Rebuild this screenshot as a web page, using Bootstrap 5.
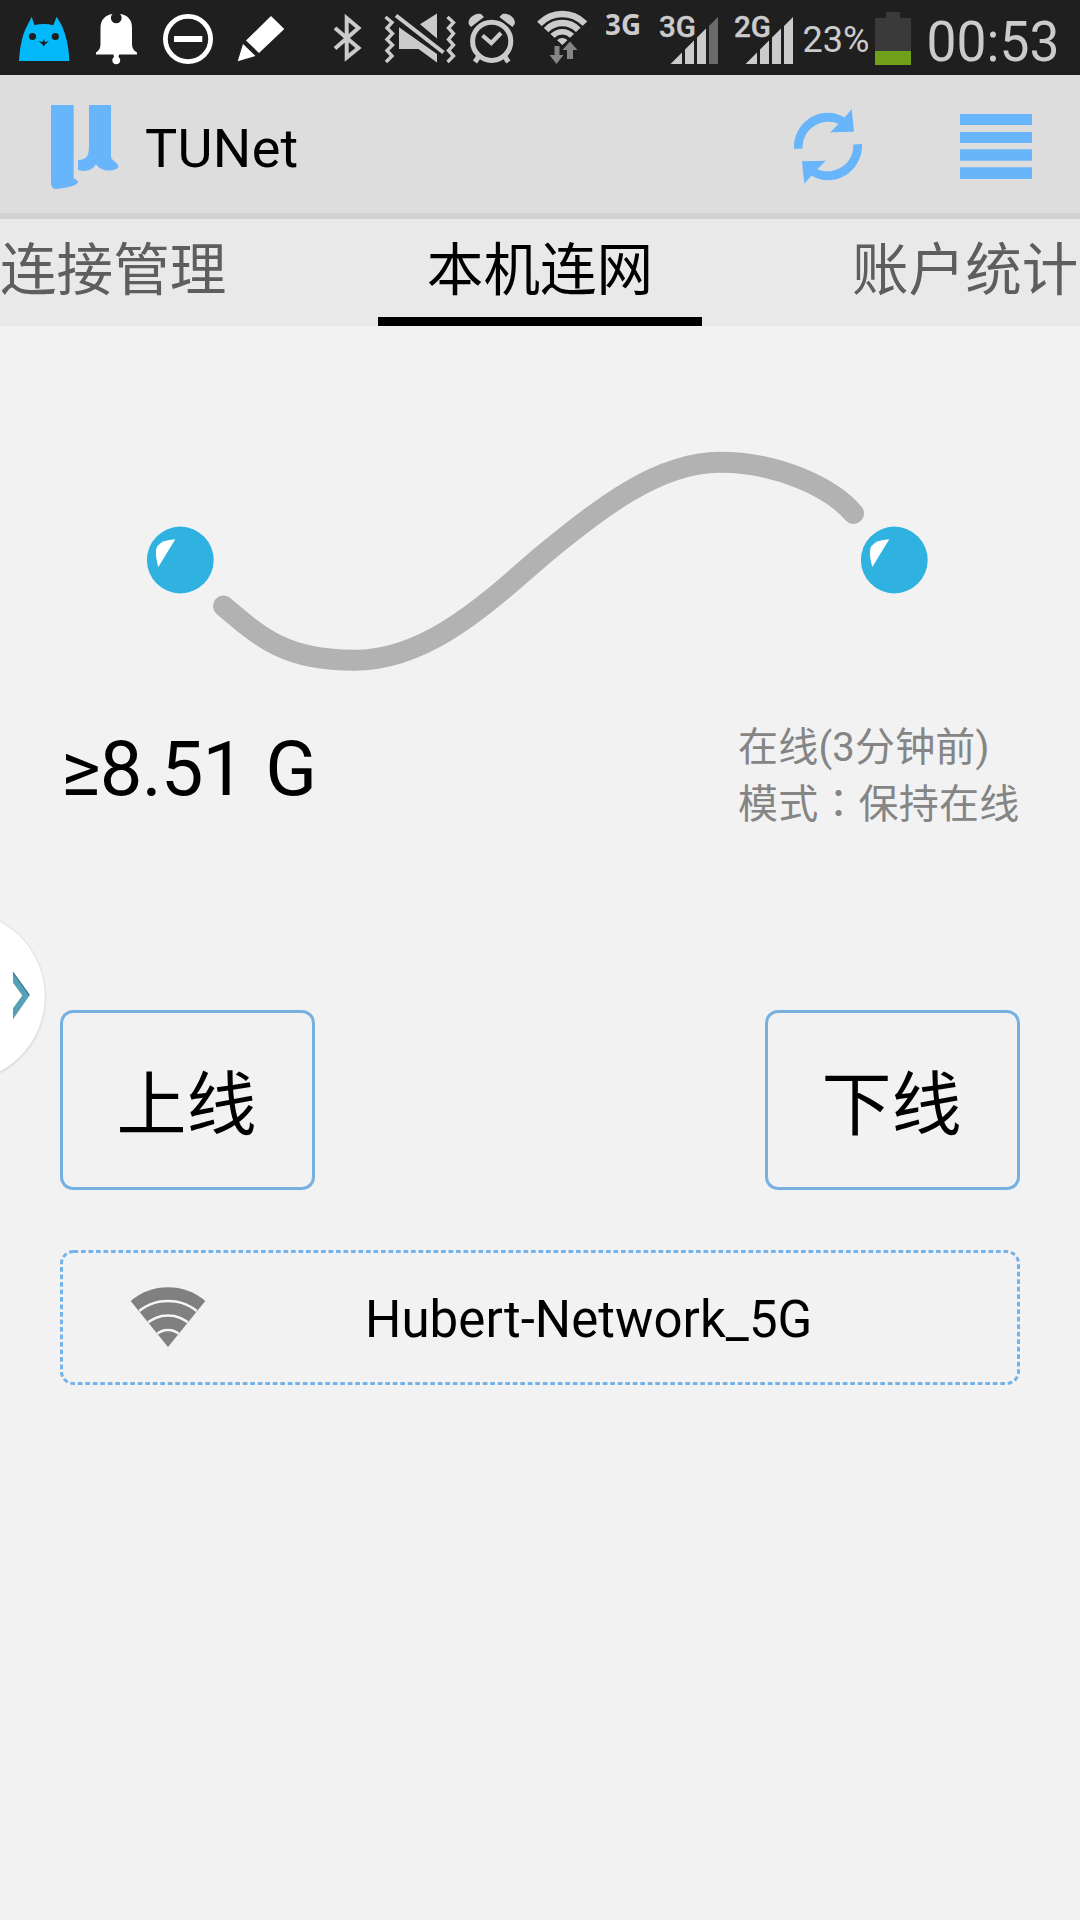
<!DOCTYPE html>
<html lang="zh-CN">
<head>
<meta charset="utf-8">
<meta name="viewport" content="width=device-width, initial-scale=1">
<title>TUNet</title>
<link href="https://cdn.jsdelivr.net/npm/bootstrap@5.3.0/dist/css/bootstrap.min.css" rel="stylesheet">
<style>
  body { background: #f2f2f2; color: #000; font-family: Roboto, "Noto Sans CJK SC", sans-serif; overflow: hidden; }
  svg { display: block; flex: none; }
  .screen { width: 1080px; height: 1920px; }
  .statusbar { height: 75px; background: #1f1f1f; color: #cbcbcb; }
  .statusbar svg text { fill: #cbcbcb; }
  .actionbar { height: 144px; background: #ddd; border-bottom: 6px solid #d2d2d2; }
  .app-title { font-size: 54px; line-height: 64px; letter-spacing: .3px; margin-left: 26px; padding-top: 10px; }
  .tabstrip { height: 107px; background: #e9e9e9; font-size: 56.6px; line-height: 104px; }
  .tabstrip .nav-link { padding: 0; color: #5e5e5e; width: 228px; white-space: nowrap; }
  .tabstrip .nav-link.active { color: #000; width: 324px; height: 107px; border-bottom: 9px solid #000; }
  .usage { font-size: 76px; line-height: 90px; letter-spacing: -.9px; word-spacing: 3px; padding: 18px 0 0 1px; }
  .state { font-size: 40px; line-height: 57px; letter-spacing: .2px; color: #858585; width: 282px; white-space: nowrap; padding-top: 13px; }
  .state .colon { font-family: "Noto Sans CJK TC", sans-serif; line-height: 1; }
  .info-row { height: 304px; padding: 0 60px; margin-top: 10px; }
  .action-row { padding: 0 60px; }
  .btn-line { width: 255px; height: 180px; border: 3px solid #77b1e2; border-radius: 13px; font-size: 70px; line-height: 100px; color: #000; padding: 12px 2px 0 0; }
  .network { width: 960px; height: 136px; margin: 60px 60px 0; }
  .network-name { font-size: 51px; line-height: 60px; letter-spacing: .05px; padding-top: 4px; }
  .drawer { left: 0; top: 905px; }
</style>
</head>
<body>
<div class="screen d-flex flex-column position-relative overflow-hidden">

  <header class="statusbar d-flex flex-shrink-0">
    <svg width="310" height="75" viewBox="0 0 310 75">
      <path fill="#04b9fa" d="M19 61C20 46 22.500 34 27 26L31.700 16.700L34.500 25.300Q44 22.500 53.300 25.300L56.700 16.700L61.500 25C66 35 69 47 69.300 61Z"/>
      <g fill="#1f1f1f"><circle cx="32.500" cy="36.500" r="3.600"/><circle cx="55.300" cy="36.500" r="3.600"/><path d="M38.500 41L42.500 42L43.800 39L45 42L49 41L45.500 44L43.800 46.500L42 44Z"/></g>
      <path fill="#fff" d="M112.500 14A5.400 5.400 0 1 0 120 14C128 15 132 20 132 28V44Q132 50 137 52.500V54.600H119L118.500 57A4 4 0 1 1 114 57L113.500 54.600H96V52.500Q100.500 50 100.500 44V28C100.500 20 105 15 112.500 14Z"/>
      <circle cx="188" cy="39" r="22.600" fill="none" stroke="#fff" stroke-width="4.800"/>
      <path fill="#fff" d="M174 36H202.300V42H174ZM271 16L284.300 29L259 53L246 40.500ZM243 44L255.500 56L237.700 61.300Z"/>
    </svg>
    <svg width="296" height="75" viewBox="310 0 296 75">
      <path fill="none" stroke="#cbcbcb" stroke-width="4" d="M335 48.500L358.500 28L346.700 18V57.500L358.500 48L335 28"/>
      <g fill="none" stroke="#cbcbcb" stroke-width="3.400">
        <path d="M385.500 17L392 22.500L387 28L392.500 33.500L387 39.500L392.500 45L387 50.500L392 56L386 62"/>
        <path d="M447.500 17L453.500 22.500L448.500 28L453.500 33.500L448.500 39.500L453.500 45L448.500 50.500L453.500 56L447.500 62"/>
        <path stroke-width="4" d="M396 15.500L443.500 52.500"/>
      </g>
      <path fill="#cbcbcb" d="M420 24.300L437 13.500V38.500ZM399 27.300L437 54V62.500L418.500 49H399Z"/>
      <g fill="none" stroke="#cbcbcb">
        <circle cx="491.700" cy="41.300" r="19.100" stroke-width="5"/>
        <path stroke-width="4.200" d="M482.500 35.500L491.300 43L501 33"/>
        <path stroke-width="5" d="M479 56L475 62M504.400 56L508.400 62"/>
      </g>
      <path fill="#cbcbcb" d="M471 27L469 24.500C466.500 19 475 12 481 14L484 17ZM512.400 27L514.400 24.500C516.900 19 508.400 12 502.400 14L499.400 17Z"/>
      <clipPath id="wf"><path d="M562.300 45L532 17V5H592V17Z"/></clipPath>
      <g clip-path="url(#wf)" fill="none" stroke="#cbcbcb" stroke-width="6.400">
        <circle cx="562.300" cy="45" r="31"/><circle cx="562.300" cy="45" r="22"/><circle cx="562.300" cy="45" r="13.300" stroke-width="5.600"/><circle cx="562.300" cy="45" r="3.500" stroke-width="7"/>
      </g>
      <path fill="#858585" d="M554.500 46H559.500V55H563.500L556.500 64L549.500 55H554.500ZM567 59H573V50H577.500L570 41.500L562.500 50H567Z"/>
    </svg>
    <svg width="189" height="75" viewBox="606 0 189 75">
      <text x="605" y="35.300" font-family="Open Sans" font-weight="700" font-size="28" textLength="36" lengthAdjust="spacingAndGlyphs">3G</text>
      <text x="659" y="37" font-family="Roboto" font-weight="500" font-size="30" textLength="37" lengthAdjust="spacingAndGlyphs" stroke="#cbcbcb" stroke-width=".4">3G</text>
      <text x="734" y="37" font-family="Roboto" font-weight="500" font-size="30" textLength="37" lengthAdjust="spacingAndGlyphs" stroke="#cbcbcb" stroke-width=".4">2G</text>
      <path fill="#cbcbcb" d="M670.500 64L682 52.500V64ZM685 64V49.500L694 40.500V64ZM697 64V37.500L706 28.500V64Z"/>
      <path fill="#6b6b6b" d="M709 64V26L718 17V64Z"/>
      <path fill="#cbcbcb" d="M745.500 64L757 52.500V64ZM760 64V49.500L769 40.500V64ZM772 64V37.500L781 28.500V64ZM784 64V26L793 17V64Z"/>
    </svg>
    <svg width="285" height="75" viewBox="795 0 285 75">
      <text x="802.500" y="52" font-family="Roboto" font-size="36" textLength="67" lengthAdjust="spacingAndGlyphs">23%</text>
      <path fill="#3a3a3a" d="M886 12H900V18H911V51H875V18H886Z"/>
      <path fill="#70a118" d="M875 51H911V65H875Z"/>
      <text x="926.500" y="60.500" font-family="Roboto" font-size="55" textLength="133" lengthAdjust="spacingAndGlyphs">00:53</text>
    </svg>
  </header>

  <nav class="actionbar navbar p-0 flex-nowrap justify-content-start align-items-center flex-shrink-0">
    <svg width="119" height="138" viewBox="0 75 119 138" fill="#69b5fb">
      <path d="M51 105H73.700V178.500Q78 180 78 182.500C75 186.500 64 188.500 55 189Q51 188 51 182Z"/>
      <path d="M89 105H111V156C111 161 118.500 162 118.500 167C116 171.500 101 173 96 164C93 170 85 172.500 78 170V160C87 160 89 155 89 146Z"/>
    </svg>
    <span class="app-title">TUNet</span>
    <svg class="ms-auto" width="76" height="138" viewBox="790 75 76 138" fill="#69b5fb">
      <path id="rf" d="M794 149C793 131 807 112.800 828 112.800Q837 112.800 844.500 117.500L851.700 109.300L854 131.700L830.300 132.300L838.500 123.700C824 117 802 127 802.700 148.500Z"/>
      <use href="#rf" transform="rotate(180 828 146.500)"/>
    </svg>
    <svg width="214" height="138" viewBox="866 75 214 138" fill="#69b5fb">
      <path d="M960 114H1032V125H960ZM960 132H1032V143H960ZM960 149.300H1032V160.700H960ZM960 167.300H1032V179H960Z"/>
    </svg>
  </nav>

  <nav class="tabstrip nav flex-nowrap justify-content-between flex-shrink-0">
    <a class="nav-link">连接管理</a>
    <a class="nav-link active text-center">本机连网</a>
    <a class="nav-link">账户统计</a>
  </nav>

  <svg width="1080" height="370" viewBox="0 326 1080 370">
    <path fill="none" stroke="#b2b2b2" stroke-width="21" stroke-linecap="round" d="M223.500 606C262 639 287 660.300 354 660.300C425 660.300 482 608 540 557.500C598 509 658 462.300 720 462.300C778 462.300 832 488 853.500 513.500"/>
    <g id="node"><circle cx="180.300" cy="560" r="33.400" fill="#2fb2e0"/><path fill="#fff" d="M175.300 539.300L158.300 567C155 556 155.500 549 157.500 546Q162 540 175.300 539.300Z"/></g>
    <use href="#node" x="714"/>
  </svg>

  <section class="info-row d-flex justify-content-between align-items-start flex-shrink-0">
    <div class="usage">≥8.51 G</div>
    <div class="state">在线(3分钟前)<br>模式<span class="colon" lang="zh-TW">：</span>保持在线</div>
  </section>

  <div class="action-row d-flex justify-content-between flex-shrink-0">
    <button type="button" class="btn btn-line">上线</button>
    <button type="button" class="btn btn-line">下线</button>
  </div>

  <div class="network d-flex align-items-center flex-shrink-0 position-relative">
    <svg class="position-absolute top-0 start-0" width="960" height="136"><rect x="1.500" y="1.500" width="957" height="132" rx="12" fill="none" stroke="#74b2ea" stroke-width="3" stroke-dasharray="4.700 2.800"/></svg>
    <svg width="305" height="136" viewBox="60 1250 305 136">
      <path fill="#808080" d="M168 1347L130.700 1301Q147 1287.300 168 1287.300T205.300 1301Z"/>
      <clipPath id="cone"><path d="M168 1347L128 1297V1280H208V1297Z"/></clipPath>
      <g clip-path="url(#cone)" fill="none" stroke="#f6f6f6" stroke-width="2.600"><circle cx="168" cy="1347" r="46"/><circle cx="168" cy="1347" r="31.500"/><circle cx="168" cy="1347" r="17"/></g>
    </svg>
    <span class="network-name">Hubert-Network_5G</span>
  </div>

  <svg class="drawer position-absolute" width="60" height="184" viewBox="0 905 60 184">
    <circle cx="-40.500" cy="997.300" r="87" fill="#e8e8e8"/>
    <circle cx="-40.500" cy="997" r="86" fill="#dedede"/>
    <circle cx="-40" cy="996.500" r="84.800" fill="#fff"/>
    <path fill="#58a0b6" d="M13 971.700L29.700 995.200L13 1019.300V1008.300L22.300 995.500L13 982.700Z"/>
    <path fill="none" stroke="#35798f" stroke-width="1.200" d="M13 972.500L29.300 995.200"/>
  </svg>
</div>
<script src="https://cdn.jsdelivr.net/npm/bootstrap@5.3.0/dist/js/bootstrap.bundle.min.js"></script>
</body>
</html>
